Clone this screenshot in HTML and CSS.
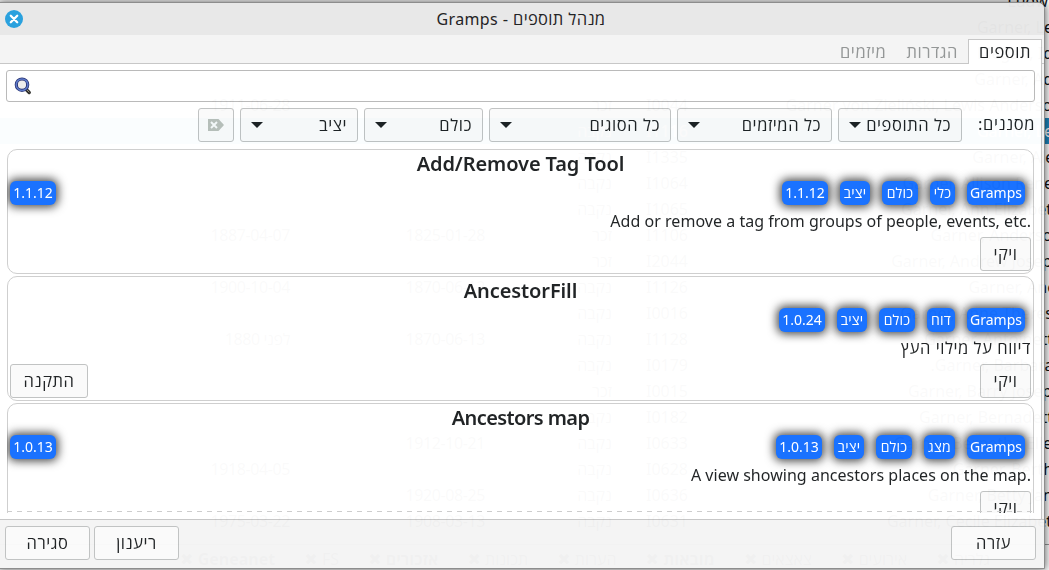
FILE: index.html
```html
<!doctype html>
<html lang="he" dir="rtl">

<head>
    <title>מנהל תוספים - Gramps</title>
    <meta charset="utf-8">
    <link rel="stylesheet" href="styles.css">
</head>

<body>
    <div class="people">
        <div class="row"><span class="name">Ludwig</span></div>
        <div class="row"><span class="name">Garner, Lee</span></div>
        <div class="row"><span class="name">Megan, Ida</span></div>
        <div class="row"><span class="name">Garner, Ada</span></div>
        <div class="row"><span class="name">Garner von Zieliński, Lewis Anderson</span><span>I0044</span><span>זכר</span><span></span><span>1911-06-28</span></div>
        <div class="row selected"><span class="name">Garner, Lee</span><span>I1116</span><span>נקבה</span></div>
        <div class="row"><span class="name">Garner, Alec</span><span>I1335</span><span>נקבה</span></div>
        <div class="row"><span class="name">Garner, Allison Renee</span><span>I1064</span><span>נקבה</span></div>
        <div class="row"><span class="name">Garner, Ann Elizabeth</span><span>I1065</span><span>נקבה</span></div>
        <div class="row"><span class="name">Garner, Anderson</span><span>I1106</span><span>זכר</span><span>1825-01-28</span><span>1887-04-07</span></div>
        <div class="row"><span class="name">Garner, Andrew Joseph</span><span>I2044</span><span>זכר</span></div>
        <div class="row"><span class="name">Garner, Anet</span><span>I1126</span><span>נקבה</span><span>1870-06-12</span><span>1900-10-04</span></div>
        <div class="row"><span class="name">Garner, Anne Therese</span><span>I0016</span><span>נקבה</span></div>
        <div class="row"><span class="name">Garner, Antoinette</span><span>I1128</span><span>נקבה</span><span>1870-06-13</span><span>לפני 1880</span></div>
        <div class="row"><span class="name">Garner, Barbara J.</span><span>I0179</span><span>נקבה</span></div>
        <div class="row"><span class="name">Garner, Barry Joseph</span><span>I0015</span><span>זכר</span></div>
        <div class="row"><span class="name">Garner, Bernadette</span><span>I0182</span><span>נקבה</span></div>
        <div class="row"><span class="name">Garner, Bernetha Ellen</span><span>I0633</span><span>נקבה</span><span>1912-10-21</span></div>
        <div class="row"><span class="name">Garner, Bertha</span><span>I0628</span><span>נקבה</span><span></span><span>1918-04-05</span></div>
        <div class="row"><span class="name">Garner, Betty Jane</span><span>I0636</span><span>נקבה</span><span>1920-08-25</span></div>
        <div class="row"><span class="name">Garner, Cecile Elizabeth</span><span>I0631</span><span>נקבה</span><span>1908-03-13</span><span>1975-03-22</span></div>
        <div class="gramplets">
            <span>גלריה ✖</span><span>אירועים ✖</span><span>צאצאים ✖</span><b>מובאות ✖</b><span>הערות ✖</span><span>תכונות ✖</span><b>אזכורים ✖</b><span>FS ✖</span><b>Geneanet ✖</b>
        </div>
    </div>

    <div class="dialog">
        <div class="titlebar">
            <span class="title">מנהל תוספים - <span class="latin">Gramps</span></span>
            <svg class="close" viewBox="0 0 18 18">
                <circle cx="9" cy="9" r="9" fill="#26a0de" />
                <path d="M5.8 5.8l6.4 6.4M12.2 5.8l-6.4 6.4" stroke="#fff" stroke-width="2.3" stroke-linecap="round" />
            </svg>
        </div>
        <div class="tabs">
            <span class="tab active">תוספים</span>
            <span class="tab">הגדרות</span>
            <span class="tab">מיזמים</span>
        </div>

        <div class="page">
            <div class="search">
                <svg width="18" height="18" viewBox="0 0 18 18">
                    <path d="M12 12.300l3.200 3.200" stroke="#2b2b28" stroke-width="3.400" stroke-linecap="round" />
                    <path d="M12.300 12.300l3 3" stroke="#96917f" stroke-width="1" />
                    <circle cx="8" cy="7.700" r="5.700" fill="#ececec" stroke="#26306f" stroke-width="3.200" />
                    <circle cx="8" cy="7.700" r="5.800" fill="none" stroke="#5b78c9" stroke-width="1.500" />
                </svg>
            </div>
            <div class="filters">
                <span class="label">מסננים:</span>
                <span class="combo all-addons">כל התוספים<i></i></span>
                <span class="combo projects">כל המיזמים<i></i></span>
                <span class="combo types">כל הסוגים<i></i></span>
                <span class="combo audience">כולם<i></i></span>
                <span class="combo status">יציב<i></i></span>
                <span class="clear">
                    <svg width="16" height="12" viewBox="0 0 16 12">
                        <path d="M0 0h10.500l5.500 6-5.500 6H0z" fill="#b9bfb9" />
                        <path d="M3 3l6 6M9 3L3 9" stroke="#f7f9f9" stroke-width="1.900" />
                    </svg>
                </span>
            </div>

            <div class="list">
                <div class="addon">
                    <h2>Add/Remove Tag Tool</h2>
                    <div class="badges">
                        <span class="badge gramps">Gramps</span>
                        <span class="badge w25">כלי</span>
                        <span class="badge w36">כולם</span>
                        <span class="badge w30">יציב</span>
                        <span class="badge ver">1.1.12</span>
                        <span class="badge ver installed">1.1.12</span>
                    </div>
                    <p class="latin" dir="ltr">Add or remove a tag from groups of people, events, etc.</p>
                    <div class="actions"><span class="btn wiki">ויקי</span></div>
                </div>
                <div class="addon">
                    <h2>AncestorFill</h2>
                    <div class="badges">
                        <span class="badge gramps">Gramps</span>
                        <span class="badge w28">דוח</span>
                        <span class="badge w36">כולם</span>
                        <span class="badge w30">יציב</span>
                        <span class="badge ver">1.0.24</span>
                    </div>
                    <p>דיווח על מילוי העץ</p>
                    <div class="actions"><span class="btn wiki">ויקי</span><span class="btn install">התקנה</span></div>
                </div>
                <div class="addon">
                    <h2 class="tight">Ancestors map</h2>
                    <div class="badges">
                        <span class="badge gramps">Gramps</span>
                        <span class="badge w31">מצג</span>
                        <span class="badge w36">כולם</span>
                        <span class="badge w30">יציב</span>
                        <span class="badge ver">1.0.13</span>
                        <span class="badge ver installed">1.0.13</span>
                    </div>
                    <p class="latin" dir="ltr">A view showing ancestors places on the map.</p>
                    <div class="actions"><span class="btn wiki">ויקי</span></div>
                </div>
                <div class="undershoot"></div>
            </div>
        </div>

        <div class="footer">
            <span class="btn">עזרה</span>
            <span class="btn refresh">ריענון</span>
            <span class="btn">סגירה</span>
        </div>
    </div>
</body>

</html>
```
FILE: styles.css
```css
* {
    box-sizing: border-box;
}

body {
    position: relative;
    width: 1049px;
    height: 570px;
    margin: 0;
    overflow: hidden;
    background: #fff;
    color: #1d2022;
    font-family: "Noto Sans", "Open Sans", "DejaVu Sans", sans-serif;
    font-size: 16px;
}

/* main window, seen through the dialog */
.people {
    position: absolute;
    top: -12px;
    left: 0;
    width: 1062px;
    color: #111;
}

.row {
    display: grid;
    grid-template-columns: 374px 76px 127px 195px 130px;
    height: 26px;
    line-height: 26px;
    white-space: nowrap;
}

.row span:nth-child(4),
.row span:nth-child(5) {
    letter-spacing: -0.4px;
}

.row.selected {
    background: #1e88c0;
    color: #fff;
}

.gramplets {
    display: flex;
    justify-content: space-between;
    margin-top: 10px;
    padding: 0 72px 0 180px;
    border-top: 1px solid #999;
    line-height: 28px;
    color: #444;
}

.dialog {
    position: absolute;
    top: 2px;
    left: -1px;
    display: flex;
    flex-direction: column;
    width: 1046px;
    height: 567px;
    border: 1px solid #8b8b8b;
    border-radius: 0 7px 0 0;
    background: #f4f4f4;
    box-shadow: 0 0 9px 1px rgba(0, 0, 0, .6);
    font-size: 16.5px;
    letter-spacing: 0.55px;
    opacity: .981;
    overflow: hidden;
}

.titlebar {
    display: flex;
    align-items: center;
    height: 32px;
    padding-left: 5px;
    background: #e8e8e8;
}

.title {
    flex: 1;
    padding-right: 25px;
    text-align: center;
    font-size: 16.5px;
    letter-spacing: 0.35px;
    line-height: 32px;
}

.title .latin {
    font-size: 16px;
}

.close {
    width: 18px;
    height: 18px;
}

.tabs {
    display: flex;
    height: 29px;
    padding: 4px 2px 0 0;
    box-shadow: inset 0 -1px #c6c6c6;
}

.tab {
    padding: 0 10px;
    line-height: 25px;
    color: #929595;
}

.tab.active {
    width: 74px;
    border: 1px solid #c6c6c6;
    border-bottom: 0;
    background: #fff;
    line-height: 23px;
    color: #1d2022;
}

.page {
    display: flex;
    flex-direction: column;
    height: 455px;
    margin-right: 2px;
    padding: 6px 6px 6px;
    border-right: 1px solid #c6c6c6;
    background: #fff;
}

.search {
    display: flex;
    justify-content: flex-end;
    align-items: center;
    height: 32px;
    flex: none;
    padding-left: 7px;
    border: 1px solid #b9b9b9;
    border-radius: 3px;
}

.filters {
    display: flex;
    gap: 6px;
    height: 34px;
    margin-top: 6px;
    flex: none;
    line-height: 32px;
}

.label {
    width: 67px;
}

.combo,
.clear,
.btn {
    border: 1px solid #c0c2c2;
    border-radius: 3px;
    background: #fafafa;
    white-space: nowrap;
}

.combo {
    display: flex;
    justify-content: space-between;
    align-items: center;
    padding: 0 10px;
}

.combo i {
    border: 6px solid transparent;
    border-top-color: #1d2022;
    border-bottom: 0;
}

.all-addons {
    width: 124px;
}

.projects {
    width: 155px;
}

.types {
    width: 182px;
}

.audience {
    width: 119px;
}

.status {
    width: 118px;
}

.clear {
    display: flex;
    justify-content: center;
    align-items: center;
    width: 36px;
}

.list {
    position: relative;
    display: flex;
    flex-direction: column;
    gap: 2px;
    flex: 1;
    margin: 7px 1px 0;
    overflow: hidden;
}

.addon {
    height: 125px;
    flex: none;
    padding: 0 2px;
    border: 1px solid #cfcfcf;
    border-radius: 10px;
}

.addon h2 {
    margin: 0;
    height: 29px;
    line-height: 28px;
    text-align: center;
    font-size: 20px;
    font-weight: 600;
    letter-spacing: -0.1px;
}

.addon h2.tight {
    letter-spacing: -0.6px;
}

.badges {
    display: flex;
    gap: 12px;
    height: 28px;
    padding: 2px 6px 2px 0;
}

.badge {
    height: 24px;
    border-radius: 6px;
    background: #1670ff;
    box-shadow: 0 0 10px 2px rgba(0, 0, 0, .75);
    color: #fff;
    text-align: center;
    font-size: 14px;
    letter-spacing: 0.2px;
    line-height: 24px;
    white-space: nowrap;
}

.gramps,
.ver {
    letter-spacing: 0;
}

.gramps {
    width: 58px;
}

.w25 {
    width: 25px;
}

.w28 {
    width: 28px;
}

.w30 {
    width: 30px;
}

.w31 {
    width: 31px;
}

.w36 {
    width: 36px;
}

.ver {
    width: 46px;
}

.installed {
    margin-right: auto;
}

.addon p {
    height: 30px;
    margin: 0;
    line-height: 28px;
    text-align: right;
}

.addon p.latin {
    font-size: 16px;
    letter-spacing: 0.03px;
}

.actions {
    display: flex;
    justify-content: space-between;
}

.btn {
    width: 85px;
    height: 34px;
    line-height: 32px;
    text-align: center;
}

.btn.wiki {
    width: 51px;
}

.btn.install {
    width: 78px;
}

.undershoot {
    position: absolute;
    right: 0;
    bottom: 1px;
    left: 0;
    height: 1px;
    background: repeating-linear-gradient(90deg, #ccc 0 5px, transparent 5px 10px);
}

.footer {
    display: flex;
    gap: 4px;
    flex: 1;
    padding: 6px 8px 0 5px;
    border-top: 1px solid #c6c6c6;
}

.refresh {
    margin-right: auto;
}
```
